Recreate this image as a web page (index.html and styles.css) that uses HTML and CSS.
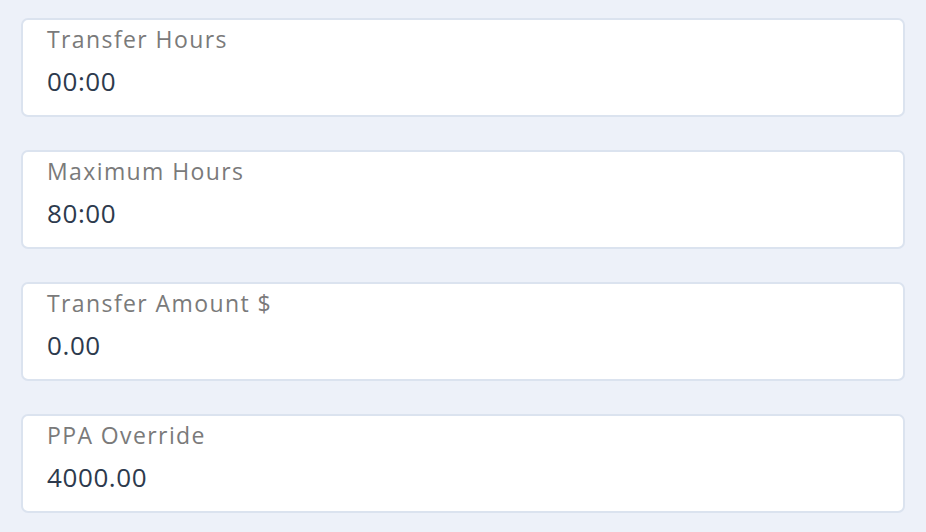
FILE: index.html
```html
<!DOCTYPE html>
<html lang="en">
<head>
    <meta charset="UTF-8">
    <meta name="viewport" content="width=device-width, initial-scale=1.0">
    <title>Transfer Settings</title>
    <link rel="stylesheet" href="styles.css">
</head>
<body>
    <div class="field-list">
        <div class="field">
            <label class="field-label">Transfer Hours</label>
            <div class="field-value">00:00</div>
        </div>
        <div class="field">
            <label class="field-label">Maximum Hours</label>
            <div class="field-value">80:00</div>
        </div>
        <div class="field">
            <label class="field-label">Transfer Amount $</label>
            <div class="field-value">0.00</div>
        </div>
        <div class="field">
            <label class="field-label">PPA Override</label>
            <div class="field-value">4000.00</div>
        </div>
    </div>
</body>
</html>
```

FILE: styles.css
```css
body {
    margin: 0;
    padding: 0;
    background: #edf1f9;
    font-family: "Open Sans", sans-serif;
}

.field-list {
    display: flex;
    flex-direction: column;
    gap: 33px;
    padding: 18px 21px;
}

.field {
    display: flex;
    flex-direction: column;
    height: 99px;
    box-sizing: border-box;
    padding: 4px 24px 0;
    background: #fff;
    border: 2px solid #dbe3ef;
    border-radius: 7px;
}

.field-label {
    font-size: 23px;
    line-height: 30px;
    color: #7a7a7a;
    letter-spacing: 1.4px;
}

.field-value {
    margin-top: 12px;
    font-size: 26px;
    line-height: 30px;
    color: #2d3a4d;
    letter-spacing: 0.6px;
}
```
